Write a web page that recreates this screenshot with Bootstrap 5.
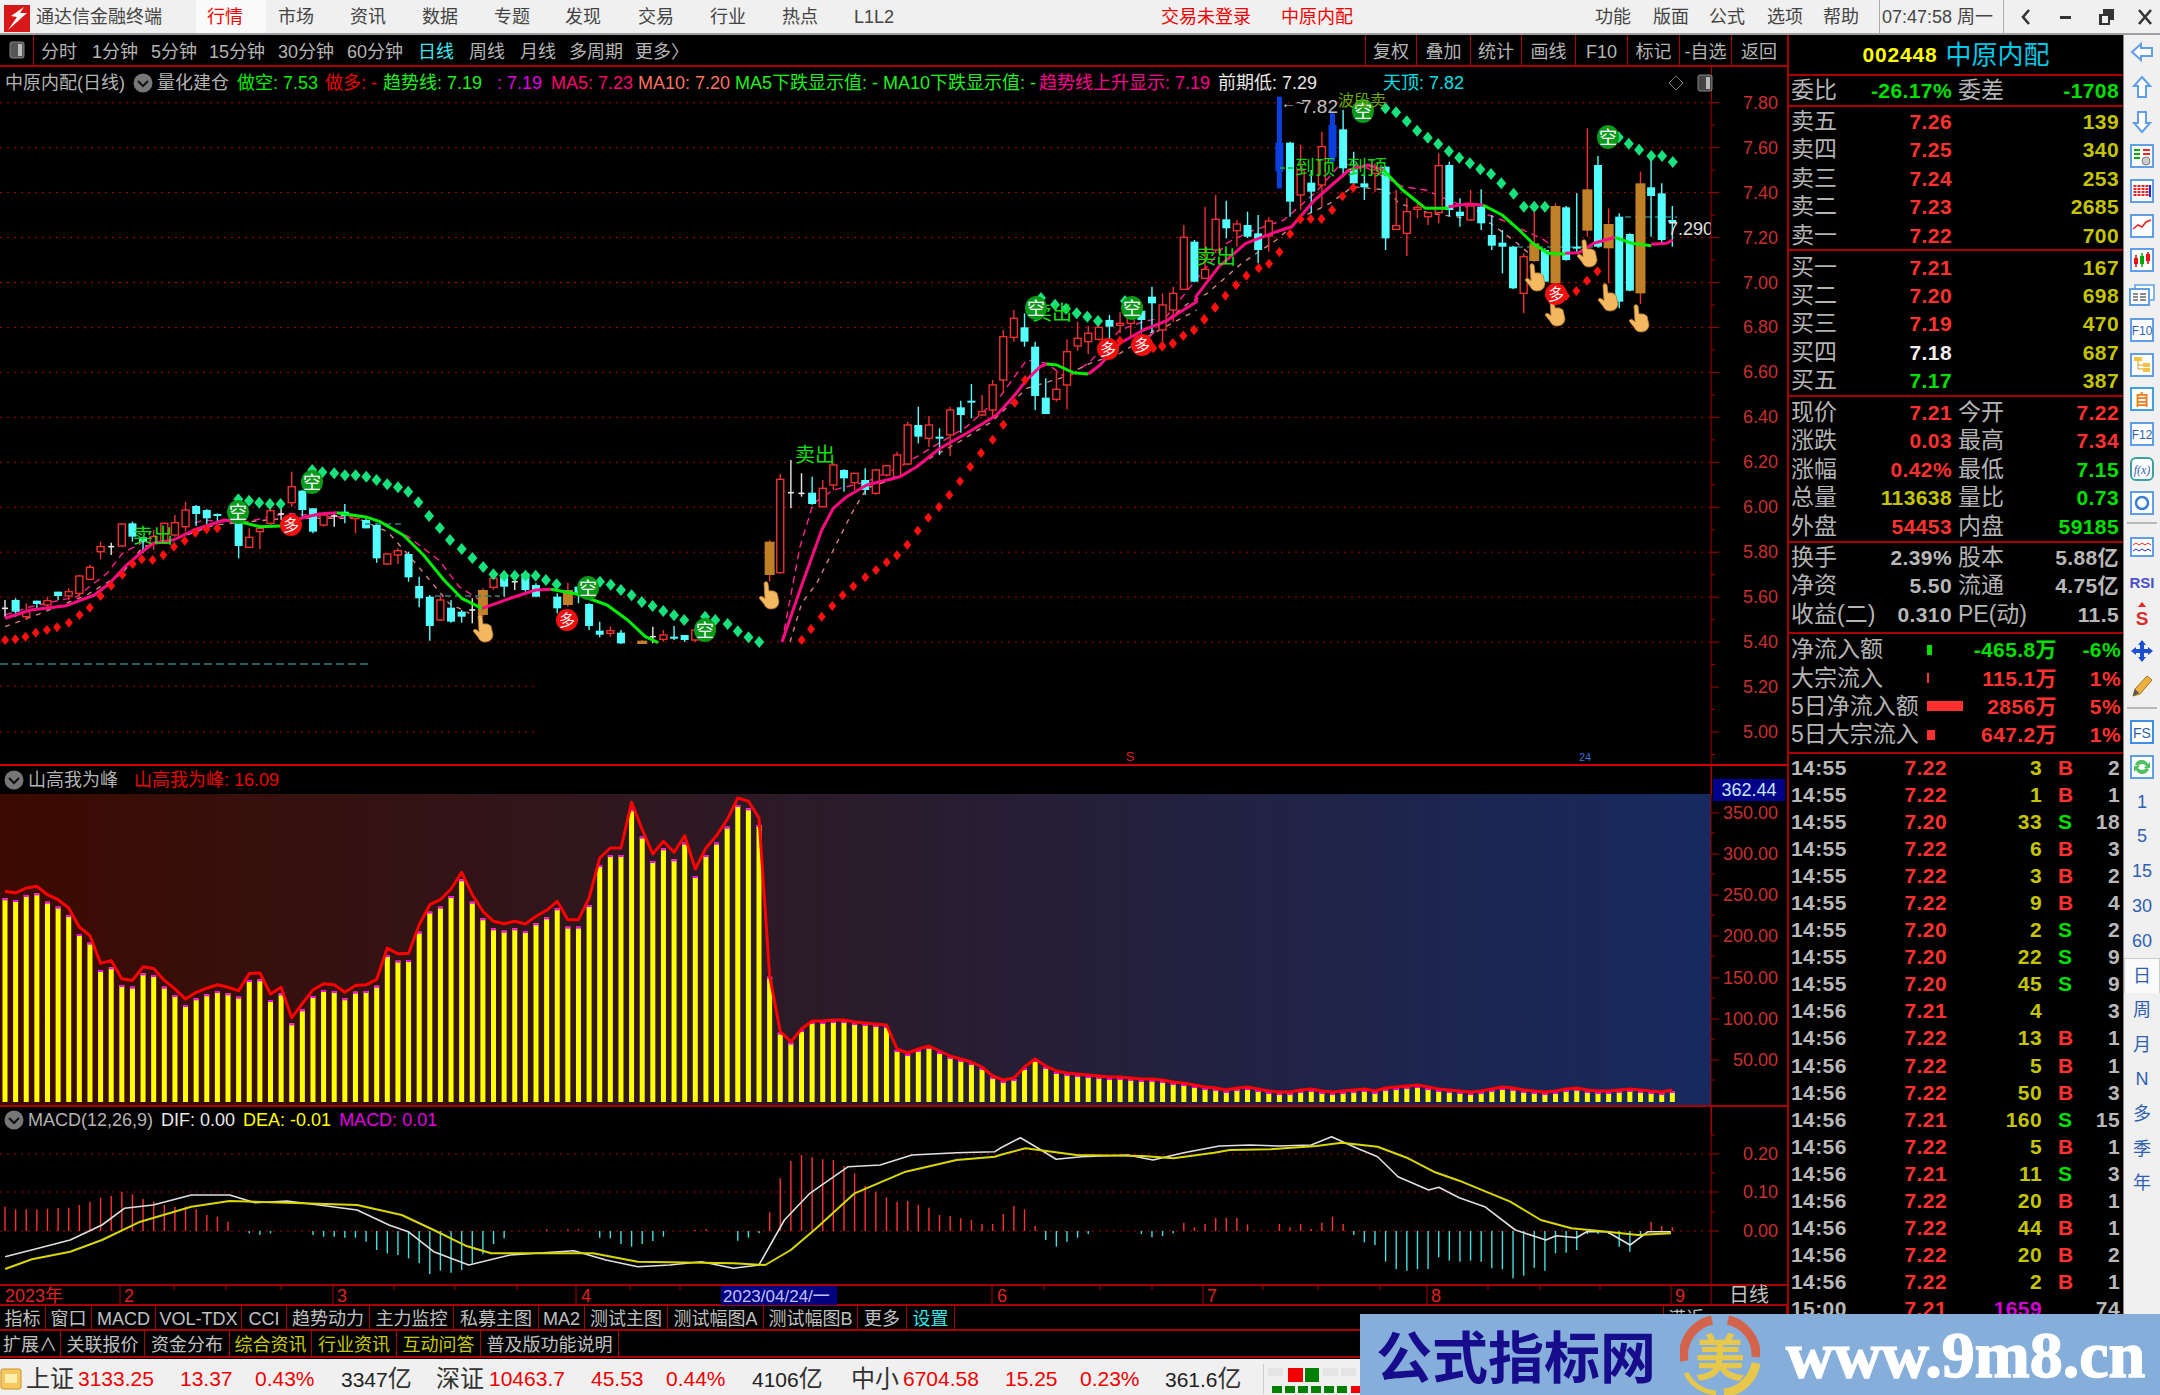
<!DOCTYPE html>
<html lang="zh-CN">
<head>
<meta charset="utf-8">
<title>通达信金融终端</title>
<link href="https://cdn.jsdelivr.net/npm/bootstrap@5.3.0/dist/css/bootstrap.min.css" rel="stylesheet">
<style>
:root{--ln:#a80000;--lab:#b4b4b4;--rd:#ff3030;--yl:#c4c400;--gn:#00e000}
html,body{margin:0;background:#000}
body{width:2160px;height:1395px;overflow:hidden;position:relative;font-family:"Liberation Sans","Noto Sans CJK SC",sans-serif;font-size:18px;line-height:1;color:var(--lab)}
.ttl{height:35px;background:#f0f0f0;color:#444;border-bottom:2px solid #a0a0a0;grid-template-columns:36px 160px 70px 72px 72px 72px 71px 73px 72px 72px 72px 319px 120px 314px 58px 56px 58px 56px 56px 124px 43px 40px 40px 37px;align-items:center;white-space:nowrap}
.ttl .act{background:#fafafa;color:#f00000;height:33px;display:flex;align-items:center;padding-left:11px}
.ttl .pl{padding-left:12px}
.ttl .redt{color:#f00000}
.ttl .sep{border-left:1px solid #aaa;height:33px;display:flex;align-items:center;padding-left:2px}
.wbody{height:1324px}
.lcol{width:1787px}
.tb1{height:32px;border-bottom:2px solid var(--ln);grid-template-columns:34px 7px 51px 59px 58px 69px 69px 71px 51px 51px 49px 66px 95px 635px 51px 54px 51px 54px 52px 52px 52px 55px;align-items:center;white-space:nowrap}
.tb1>span{padding-top:3px}
.tb1 .boxi{height:30px;border-right:1px solid var(--ln);display:flex;align-items:center;justify-content:center;padding-top:0}
.tb1 .cel{height:30px;border-left:1px solid var(--ln);display:flex;align-items:center;justify-content:center}
.tb1 .on{color:#40e8f0}
.phd{width:1712px;border-right:1px solid var(--ln);display:flex;align-items:center}
.phd1{height:33px;padding-bottom:2px}.phd2{height:28px;padding-bottom:1px}.phd3{height:26px}
.phd span{white-space:nowrap}
.hgrid1{display:grid;grid-template-columns:5px 128px 24px 80px 88px 58px 114px 54px 87px 97px 148px 156px 179px 165px 285px 29px 14px;align-items:center;width:100%}
.cgn{color:#00f000}.crd{color:#f00000}.cmg{color:#e000e0}.cpk{color:#ff0070}.csl{color:#ff7060}.clm{color:#20f020}.cfu{color:#ff0090}.cwt{color:#e8e8e8}.ccy{color:#00e0e8}
.ico{width:20px;height:20px;display:block}
.chartsvg{display:block;overflow:visible}
.brd{height:2px;background:#d00000}
.brd2{height:2px;background:var(--ln)}
.rowb{border-bottom:2px solid var(--ln);align-items:center}
.row1{height:25px;grid-template-columns:46px 46px 64px 86px 45px 83px 84px 85px 46px 83px 96px 94px 49px 48px 708px 124px}
.row2{height:27px;grid-template-columns:61px 84px 85px 82px 85px 84px 138px 1168px}
.cl{height:100%;display:flex;align-items:center;justify-content:center;border-right:1px solid var(--ln);white-space:nowrap;color:#c0c0c0;padding-top:3px}
.cl.cy{color:#c8c800}
.cl.ccy{color:#30e8e8}
.cl.lft{justify-content:flex-start;border-left:1px solid var(--ln);padding-left:4px}
.pan{width:337px;border-left:2px solid var(--ln);border-right:1px solid #888;font-size:23px}
.phead{height:41px;border-bottom:2px solid var(--ln);font-size:24px;gap:8px}
.phead b{font-weight:700;color:#ffff00;font-size:21px;letter-spacing:.8px}
.phead i{font-style:normal;color:#00c8e8;font-size:26px}
.qr{display:grid;grid-template-columns:60px 101px 6px 60px 101px;padding-left:2px;height:28.4px;align-items:center;white-space:nowrap}
.qr .n,.fr .n,.tk .n{font-size:21px;font-weight:700;letter-spacing:.4px}
.qr .n{text-align:right}
.qr>span:nth-child(3){grid-column:4}
.qr>span:nth-child(4){grid-column:5}
.blk{border-bottom:2px solid var(--ln)}
.b-wb{padding-bottom:1px}
.b-by{padding-top:1.5px}
.b-qu{padding-top:1.5px;padding-bottom:1px}
.b-fi{padding-bottom:4px}
.b-fl{padding-top:1px;padding-bottom:3px}
.r{color:var(--rd)}.y{color:var(--yl)}.g{color:var(--gn)}.w{color:#f0f0f0}.gy{color:#b8b8b8}.m{color:#d000d0}
.fr{display:grid;grid-template-columns:136px 40px 90px 64px;padding-left:2px;height:28.4px;align-items:center;white-space:nowrap}
.fr .e{text-align:right}
.brr{height:10px;display:block}
.tk{display:grid;grid-template-columns:54px 102px 95px 34px 44px;padding-left:2px;height:27.05px;align-items:center}
.tk .e{text-align:right}
.tk .bs{padding-left:16px}
.sid{width:36px;background:#f0f0f0;padding-top:0}
.sic{height:34.7px;display:flex;align-items:center;justify-content:center;color:#2f5fb0;font-size:18px}
.sic svg{display:block}
.sdiv{height:2px;background:#b8b8b8;margin:1px 3px 6px}
.sdiv2{height:2px;background:#b8b8b8;margin:4px 3px 6px}
.stab{background:#fafafa;border:1px solid #ccc;border-bottom:0}
.stat{height:36px;background:#f0f0f0;padding-top:3px;grid-template-columns:26px 52px 102px 75px 86px 95px 53px 102px 75px 86px 99px 52px 102px 75px 85px 98px 50px;align-items:center;color:#222;font-size:21px;white-space:nowrap}
.stat .cj{font-size:24px;color:#333}
.stat .rn{color:#f00000}
.wmk{position:absolute;left:1360px;top:1314px;width:800px;height:81px;background:#85aedb;overflow:hidden}
.wmt{position:absolute;left:16px;top:6px;font-size:56px;font-weight:700;color:#170d8c;line-height:68px;white-space:nowrap;font-family:"Noto Sans CJK SC",sans-serif}
.wmu{position:absolute;left:426px;top:6px;font:700 66px/70px "Liberation Serif",serif;color:#fff;white-space:nowrap;-webkit-text-stroke:1.5px #fff}
.wml{position:absolute;left:320px;top:1px}
</style>
</head>
<body>

<div class="ttl d-grid">
  <svg width="30" height="30" viewBox="0 0 30 30"><rect x="4" y="3" width="26" height="27" fill="#d81818"/><path d="M24 5 L11 14 L17 15 L8 28 L27 11 L20 11 Z" fill="#fff"/></svg>
  <span>通达信金融终端</span>
  <span class="act">行情</span><span class="pl">市场</span><span class="pl">资讯</span><span class="pl">数据</span><span class="pl">专题</span><span class="pl">发现</span><span class="pl">交易</span><span class="pl">行业</span><span class="pl">热点</span><span class="pl">L1L2</span>
  <span class="redt">交易未登录</span><span class="redt">中原内配</span>
  <span>功能</span><span>版面</span><span>公式</span><span>选项</span><span>帮助</span>
  <span class="sep">07:47:58 周一</span>
  <span class="sep d-flex justify-content-center"><svg width="14" height="20" viewBox="0 0 14 20"><path d="M10 3 L4 10 L10 17" fill="none" stroke="#333" stroke-width="2.6"/></svg></span>
  <span class="d-flex justify-content-center"><svg width="14" height="14"><rect x="1" y="6" width="11" height="3" fill="#333"/></svg></span>
  <span class="d-flex justify-content-center"><svg width="18" height="18" viewBox="0 0 18 18"><path d="M6 1h11v11h-4v5H2V6h4z M5 8v7h6V8z" fill="#333" fill-rule="evenodd"/></svg></span>
  <span class="d-flex justify-content-center"><svg width="16" height="18" viewBox="0 0 16 18"><path d="M2 2 L14 16 M14 2 L2 16" stroke="#333" stroke-width="2.6"/></svg></span>
</div>

<div class="wbody d-flex">
  <div class="lcol">
    <div class="tb1 d-grid">
      <span class="boxi"><svg width="16" height="18" viewBox="0 0 16 18"><rect x="1" y="1" width="14" height="16" rx="2" fill="#555" stroke="#888"/><rect x="9" y="3" width="4" height="12" fill="#bbb"/></svg></span><span></span>
      <span>分时</span><span>1分钟</span><span>5分钟</span><span>15分钟</span><span>30分钟</span><span>60分钟</span><span class="on">日线</span><span>周线</span><span>月线</span><span>多周期</span><span>更多〉</span><span></span>
      <span class="cel">复权</span><span class="cel">叠加</span><span class="cel">统计</span><span class="cel">画线</span><span class="cel">F10</span><span class="cel">标记</span><span class="cel">-自选</span><span class="cel">返回</span>
    </div>

    <div class="phd phd1"><div class="hgrid1">
      <span></span><span>中原内配(日线)</span>
      <svg class="ico" viewBox="0 0 20 20"><circle cx="10" cy="10" r="9.5" fill="#777"/><path d="M5 8 L10 13 L15 8" fill="none" stroke="#111" stroke-width="2"/></svg>
      <span>量化建仓</span>
      <span class="cgn">做空: 7.53</span><span class="crd">做多: -</span><span class="clm">趋势线: 7.19</span><span class="cmg">: 7.19</span>
      <span class="cpk">MA5: 7.23</span><span class="csl">MA10: 7.20</span><span class="clm">MA5下跌显示值: -</span><span class="clm">MA10下跌显示值: -</span><span class="cfu">趋势线上升显示: 7.19</span><span class="cwt">前期低: 7.29</span><span class="ccy">天顶: 7.82</span>
      <svg width="16" height="16" viewBox="0 0 16 16"><path d="M8 1 L15 8 L8 15 L1 8Z" fill="none" stroke="#777"/></svg>
      <svg width="16" height="18" viewBox="0 0 16 18"><rect x="1" y="1" width="14" height="16" rx="2" fill="#444" stroke="#888"/><rect x="9" y="3" width="4" height="12" fill="#bbb"/></svg>
    </div></div>
    <svg id="s1" class="chartsvg" width="1787" height="664" viewBox="0 100 1787 664"></svg>
    <div class="brd"></div>

    <div class="phd phd2">
      <svg class="ico ms-1" viewBox="0 0 20 20"><circle cx="10" cy="10" r="9.5" fill="#777"/><path d="M5 8 L10 13 L15 8" fill="none" stroke="#111" stroke-width="2"/></svg>
      <span class="ms-1">山高我为峰</span><span class="crd ms-3">山高我为峰: 16.09</span>
    </div>
    <svg id="s2" class="chartsvg" width="1787" height="311" viewBox="0 794 1787 311"></svg>
    <div class="brd2"></div>

    <div class="phd phd3">
      <svg class="ico ms-1" viewBox="0 0 20 20"><circle cx="10" cy="10" r="9.5" fill="#777"/><path d="M5 8 L10 13 L15 8" fill="none" stroke="#111" stroke-width="2"/></svg>
      <span class="ms-1">MACD(12,26,9)</span><span class="cwt ms-2">DIF: 0.00</span><span class="ms-2" style="color:#ffff00">DEA: -0.01</span><span class="cmg ms-2">MACD: 0.01</span>
    </div>
    <svg id="s3" class="chartsvg" width="1787" height="151" viewBox="0 1133 1787 151"></svg>
    <svg id="s4" class="chartsvg" width="1787" height="22" viewBox="0 1284 1787 22"></svg>

    <div class="row1 rowb d-grid">
      <span class="cl">指标</span><span class="cl">窗口</span><span class="cl">MACD</span><span class="cl">VOL-TDX</span><span class="cl">CCI</span><span class="cl">趋势动力</span><span class="cl">主力监控</span><span class="cl">私募主图</span><span class="cl">MA2</span><span class="cl">测试主图</span><span class="cl">测试幅图A</span><span class="cl">测试幅图B</span><span class="cl">更多</span><span class="cl ccy">设置</span><span></span><span class="cl lft">满近</span>
    </div>
    <div class="row2 rowb d-grid">
      <span class="cl">扩展∧</span><span class="cl">关联报价</span><span class="cl">资金分布</span><span class="cl cy">综合资讯</span><span class="cl cy">行业资讯</span><span class="cl cy">互动问答</span><span class="cl">普及版功能说明</span><span></span>
    </div>
  </div>

  <div class="pan">
    <div class="phead d-flex align-items-center justify-content-center"><b>002448</b><i>中原内配</i></div>
    <div class="blk b-wb"><div class="qr"><span>委比</span><span class="n g">-26.17%</span><span>委差</span><span class="n g">-1708</span></div></div>
    <div class="blk" id="sell"></div>
    <div class="blk b-by" id="buy"></div>
    <div class="blk b-qu" id="quo"></div>
    <div class="blk b-fi" id="fin"></div>
    <div class="blk b-fl" id="flow"></div>
    <div id="ticks"></div>
  </div>

  <div class="sid" id="side">
    <div class="sic"><svg width="24" height="20" viewBox="0 0 24 20"><path d="M2 10 L11 2 V6 H22 V14 H11 V18Z" fill="#fff" stroke="#5f9ee8" stroke-width="2"/></svg></div>
    <div class="sic"><svg width="20" height="24" viewBox="0 0 20 24"><path d="M10 2 L18 11 H14 V22 H6 V11 H2Z" fill="#fff" stroke="#5f9ee8" stroke-width="2"/></svg></div>
    <div class="sic"><svg width="20" height="24" viewBox="0 0 20 24"><path d="M10 22 L18 13 H14 V2 H6 V13 H2Z" fill="#fff" stroke="#5f9ee8" stroke-width="2"/></svg></div>
    <div class="sic"><svg width="24" height="24"><rect x="1" y="1" width="22" height="22" fill="#fff" stroke="#5f9ee8" stroke-width="2"/><path d="M4 6h6M4 10h6M4 14h6" stroke="#0a0" stroke-width="2"/><path d="M13 6h7M13 10h7" stroke="#e22" stroke-width="2"/><circle cx="16" cy="17" r="4" fill="#ccc" stroke="#777"/></svg></div>
    <div class="sic"><svg width="24" height="24"><rect x="1" y="1" width="22" height="22" fill="#fff" stroke="#5f9ee8" stroke-width="2"/><path d="M5 6v12M9 6v12M13 6v12M17 6v12" stroke-width="3" stroke-dasharray="2 1" fill="none" stroke="#e22"/><path d="M20 6v12" stroke="#22e" stroke-width="2"/></svg></div>
    <div class="sic"><svg width="24" height="24"><rect x="1" y="1" width="22" height="22" fill="#fff" stroke="#5f9ee8" stroke-width="2"/><path d="M3 15 L8 11 L12 13 L16 8 L21 6" fill="none" stroke="#e22" stroke-width="1.6"/></svg></div>
    <div class="sic"><svg width="24" height="24"><rect x="1" y="1" width="22" height="22" fill="#fff" stroke="#5f9ee8" stroke-width="2"/><path d="M6 7v12M18 4v12" stroke="#d00" stroke-width="1.5"/><path d="M12 5v14" stroke="#0a0" stroke-width="1.5"/><rect x="4" y="10" width="4" height="6" fill="#e11"/><rect x="10" y="8" width="4" height="8" fill="#0a0"/><rect x="16" y="6" width="4" height="7" fill="#e11"/></svg></div>
    <div class="sic"><svg width="26" height="22"><rect x="6" y="1" width="19" height="15" fill="#fff" stroke="#5f9ee8" stroke-width="1.5"/><rect x="1" y="5" width="19" height="16" fill="#fff" stroke="#5f9ee8" stroke-width="2"/><path d="M4 10h5M11 10h6M4 13h5M11 13h6M4 16h5M11 16h6" stroke="#666" stroke-width="1.5"/></svg></div>
    <div class="sic"><svg width="24" height="24"><rect x="1" y="1" width="22" height="22" fill="#fff" stroke="#5f9ee8" stroke-width="2"/><text x="12" y="17" text-anchor="middle" font-size="12" fill="#2f5fb0" font-family="Liberation Sans">F10</text></svg></div>
    <div class="sic"><svg width="24" height="24"><rect x="1" y="1" width="22" height="22" fill="#fff" stroke="#5f9ee8" stroke-width="2"/><path d="M8 8v8h5M8 12h5" stroke="#d9a020" fill="none"/><rect x="4" y="4" width="8" height="4" fill="#f5c040"/><rect x="13" y="10" width="7" height="4" fill="#f5c040"/><rect x="13" y="15" width="7" height="4" fill="#f5c040"/></svg></div>
    <div class="sic"><svg width="24" height="24"><rect x="1" y="1" width="22" height="22" fill="#fff" stroke="#3fa0e8" stroke-width="2"/><text x="12" y="18" text-anchor="middle" font-size="15" font-weight="700" fill="#f08020" font-family="Noto Sans CJK SC">自</text></svg></div>
    <div class="sic"><svg width="24" height="24"><rect x="1" y="1" width="22" height="22" fill="#fff" stroke="#5f9ee8" stroke-width="2"/><text x="12" y="17" text-anchor="middle" font-size="12" fill="#2f5fb0" font-family="Liberation Sans">F12</text></svg></div>
    <div class="sic"><svg width="24" height="24"><rect x="1" y="1" width="22" height="22" rx="5" fill="#fff" stroke="#3aa0a0" stroke-width="2"/><text x="12" y="17" text-anchor="middle" font-size="12" font-style="italic" fill="#2f5fb0" font-family="Liberation Serif">f(x)</text></svg></div>
    <div class="sic"><svg width="24" height="24"><rect x="1" y="1" width="22" height="22" fill="#fff" stroke="#5f9ee8" stroke-width="2"/><circle cx="12" cy="12" r="6" fill="none" stroke="#3a80d0" stroke-width="2.5"/></svg></div>
    <div class="sdiv"></div>
    <div class="sic"><svg width="24" height="20"><rect x="1" y="1" width="22" height="18" fill="#fff" stroke="#5f9ee8" stroke-width="2"/><path d="M3 8 l3-2 3 2 3-2 3 2 3-2 3 2" fill="none" stroke="#e22"/><path d="M3 14 l3-2 3 2 3-2 3 2 3-2 3 2" fill="none" stroke="#22c"/></svg></div>
    <div class="sic"><svg width="28" height="18"><text x="14" y="15" text-anchor="middle" font-size="15" font-weight="700" fill="#4a50c8" font-family="Liberation Sans">RSI</text></svg></div>
    <div class="sic"><svg width="24" height="28"><path d="M12 0 L16 5 H8Z" fill="#e22"/><text x="12" y="23" text-anchor="middle" font-size="19" font-weight="700" fill="#d83030" font-family="Liberation Sans">S</text></svg></div>
    <div class="sic"><svg width="24" height="24" viewBox="0 0 24 24"><path d="M12 1 L16 6 H14 V10 H18 V8 L23 12 L18 16 V14 H14 V18 H16 L12 23 L8 18 H10 V14 H6 V16 L1 12 L6 8 V10 H10 V6 H8Z" fill="#1a50d0"/></svg></div>
    <div class="sic"><svg width="22" height="24" viewBox="0 0 22 24"><path d="M2 22 L4 15 L16 2 L21 6 L9 20Z" fill="#f0b040" stroke="#a07020"/><path d="M2 22 L4 15 L8 19Z" fill="#555"/></svg></div>
    <div class="sdiv2"></div>
    <div class="sic"><svg width="24" height="24"><rect x="1" y="1" width="22" height="22" fill="#fff" stroke="#3f8ee8" stroke-width="2"/><text x="12" y="18" text-anchor="middle" font-size="14" fill="#2f5fb0" font-family="Liberation Sans">FS</text></svg></div>
    <div class="sic"><svg width="24" height="24"><rect x="1" y="1" width="22" height="22" fill="#fff" stroke="#5f9ee8" stroke-width="2"/><path d="M5 10 A7 7 0 0 1 18 9 L20 7 V13 H14 L16 11 A5 5 0 0 0 8 11Z M19 14 A7 7 0 0 1 6 15 L4 17 V11 H10 L8 13 A5 5 0 0 0 16 13Z" fill="#50c060"/></svg></div>
    <div class="sic">1</div><div class="sic">5</div><div class="sic">15</div><div class="sic">30</div><div class="sic">60</div>
    <div class="sic stab">日</div><div class="sic">周</div><div class="sic">月</div><div class="sic">N</div><div class="sic">多</div><div class="sic">季</div><div class="sic">年</div>
  </div>
</div>

<div class="stat d-grid">
  <svg width="22" height="24" class="ms-0"><rect x="1" y="2" width="20" height="20" rx="2" fill="#f5c860" stroke="#c89020"/><rect x="5" y="7" width="12" height="9" fill="#fff0b0"/></svg>
  <span class="cj">上证</span><span class="rn">3133.25</span><span class="rn">13.37</span><span class="rn">0.43%</span><span>3347<span class="cj">亿</span></span>
  <span class="cj">深证</span><span class="rn">10463.7</span><span class="rn">45.53</span><span class="rn">0.44%</span><span>4106<span class="cj">亿</span></span>
  <span class="cj">中小</span><span class="rn">6704.58</span><span class="rn">15.25</span><span class="rn">0.23%</span><span>361.6<span class="cj">亿</span></span>
  <svg width="130" height="30"><path d="M0 0v36" stroke="#aaa"/><g fill="#e4e4e4"><rect x="5" y="4" width="15" height="8"/><rect x="60" y="4" width="15" height="8"/><rect x="78" y="4" width="15" height="8"/></g><rect x="25" y="4" width="15" height="14" fill="#f00000"/><rect x="42" y="4" width="14" height="14" fill="#008000"/><g fill="#008000"><rect x="9" y="22" width="10" height="7"/><rect x="22" y="22" width="10" height="7"/><rect x="35" y="22" width="10" height="7"/><rect x="48" y="22" width="10" height="7"/><rect x="61" y="22" width="10" height="7"/><rect x="74" y="22" width="10" height="7"/></g><rect x="88" y="22" width="10" height="7" fill="#f00000"/></svg>
</div>

<div class="wmk">
  <span class="wmt">公式指标网</span>
  <svg class="wml" width="80" height="80" viewBox="0 0 80 80">
    <path d="M4 46 A36 36 0 0 1 32 5" fill="none" stroke="#d4634c" stroke-width="9"/>
    <path d="M48 5 A36 36 0 0 1 76 42" fill="none" stroke="#d4634c" stroke-width="9"/>
    <path d="M76 48 A36 36 0 0 1 44 78" fill="none" stroke="#e8c84a" stroke-width="9"/>
    <path d="M36 78 A36 36 0 0 1 6 58" fill="none" stroke="#e8c84a" stroke-width="5"/>
    <text x="40" y="61" text-anchor="middle" font-size="50" font-weight="700" fill="#e8c84a" font-family="Noto Sans CJK SC">美</text>
  </svg>
  <span class="wmu">www.9m8.cn</span>
</div>

<script>
(function(){
var X=function(i){return 5+10.62*i};
var h1='',h2='',h3='',h4='';
function txt(x,y,s,fill,size,anchor,extra){return '<text x="'+x+'" y="'+y+'" fill="'+fill+'" font-size="'+size+'" text-anchor="'+(anchor||'start')+'" font-family="Liberation Sans,Noto Sans CJK SC,sans-serif" '+(extra||'')+'>'+s+'</text>'}
function line(x1,y1,x2,y2,c,w,extra){return '<line x1="'+x1+'" y1="'+y1+'" x2="'+x2+'" y2="'+y2+'" stroke="'+c+'" stroke-width="'+(w||1)+'" '+(extra||'')+'/>'}
var z8=function(p){return [p[0]/1.96,440+p[1]/3]},z9=function(p){return [800+p[0]/3,300+p[1]/3]},z7=function(p){return [1150+p[0]/2.613,80+p[1]/3]};
function P(f,a){var o=[];for(var k=0;k<a.length;k+=2){o.push(f([a[k],a[k+1]]))}return o}
function poly(pts,c,w,extra){return '<polyline fill="none" points="'+pts.map(function(p){return p[0].toFixed(1)+','+p[1].toFixed(1)}).join(' ')+'" stroke="'+c+'" stroke-width="'+w+'" stroke-linejoin="round" '+(extra||'')+'/>'}

var yp=function(n){return 102.7+n*44.95};
for(var n=0;n<=12;n++){h1+=line(0,yp(n),1711,yp(n),'#b00000',1,'stroke-dasharray="2 5"')}
var col={r:'#f03030',c:'#54ffff',w:'#e8e8e8',o:'#c08028',b:'#0a40e0'};
function cand(i,t,a,b,c,d,conv){
  var x=X(i),ya=conv(a),yb=conv(b),yc=conv(c),yd=conv(d),k=col[t],s='';
  var wk=(t=='o')?'#f03030':k;
  s+=line(x,yc,x,yd,wk,t=='b'?5:1.4);
  if(t=='r'){s+='<rect x="'+(x-3.5)+'" y="'+ya+'" width="7" height="'+Math.max(yb-ya,2)+'" fill="#000" stroke="'+k+'" stroke-width="1.4"/>'}
  else if(t=='w'){s+=line(x-3,ya,x+3,ya,k,1.6)}
  else{s+='<rect x="'+(x-(t=='o'?5:4))+'" y="'+ya+'" width="'+(t=='o'?10:8)+'" height="'+Math.max(yb-ya,2)+'" fill="'+k+'"/>'}
  return s;
}
var ya=function(v){return 440+v/3},yb=function(v){return 300+v/3},yc=function(v){return 80+v/3};
var A=[[0,'w',505,505,480,530],[1,'c',480,515,475,530],[2,'r',515,530,490,540],[3,'c',482,492,482,510],[4,'r',482,495,470,510],[5,'c',455,468,455,480],[6,'r',455,468,445,480],[7,'r',408,460,405,470],[8,'r',382,418,375,420],[9,'r',320,335,305,358],[10,'w',320,320,308,345],[11,'r',252,318,250,322],[12,'c',250,290,245,305],[13,'c',292,306,290,340],[14,'r',290,310,270,330],[15,'r',250,310,248,312],[16,'r',248,285,225,290],[17,'r',210,260,185,275],[18,'c',198,222,195,258],[19,'c',210,235,208,260],[20,'c',222,226,220,250],[22,'c',230,318,225,355],[23,'r',292,322,265,325],[24,'r',265,275,255,328],[25,'r',212,250,205,255],[26,'w',222,222,205,240],[27,'r',140,188,95,200],[28,'c',152,210,150,230],[29,'c',205,275,205,280],[30,'r',225,255,220,260],[31,'w',228,228,220,260],[32,'c',215,228,192,250],[33,'r',230,235,225,280],[34,'c',240,265,235,265],[35,'c',255,355,250,368],[36,'r',342,372,340,374],[37,'r',332,345,325,372],[38,'c',342,412,335,425],[39,'c',438,475,410,502],[40,'c',470,558,465,602],[41,'r',480,540,470,542],[42,'c',503,545,480,548],[43,'c',515,530,510,548],[44,'w',510,510,475,550],[45,'o',450,525,445,530],[46,'r',415,442,410,450],[47,'c',405,440,400,470],[48,'w',425,425,415,450],[49,'c',400,450,398,455],[50,'c',435,470,430,472],[52,'c',470,505,460,520],[53,'o',450,495,428,500],[54,'c',440,460,435,490],[55,'c',492,558,490,570],[56,'c',572,584,545,592],[57,'r',572,580,560,590],[58,'c',578,610,570,615],[60,'o',602,612,600,615],[61,'w',590,590,560,610],[62,'r',585,598,570,605],[63,'c',590,596,558,600],[64,'c',585,600,585,606],[65,'r',570,600,565,606],[72,'o',305,405,300,425],[73,'r',118,398,102,400],[74,'w',158,158,60,205]];
var B=[[75,'w',580,580,520,590],[76,'c',578,612,530,614],[77,'r',565,620,540,622],[78,'r',495,555,490,570],[79,'c',510,535,508,575],[80,'r',520,548,518,570],[81,'c',540,570,505,585],[82,'r',510,580,508,584],[83,'r',497,525,495,530],[84,'r',465,530,455,532],[85,'r',375,492,365,495],[86,'c',375,410,320,430],[87,'r',375,415,348,440],[88,'c',410,412,385,465],[89,'r',330,405,320,468],[90,'c',322,345,302,398],[91,'c',302,305,252,355],[92,'r',335,345,285,348],[93,'r',255,330,240,350],[94,'r',110,240,90,280],[95,'r',55,112,30,125],[96,'c',82,125,40,140],[97,'c',140,288,125,330],[98,'c',293,342,235,342],[99,'r',268,298,215,305],[100,'r',155,255,118,328],[101,'r',115,138,65,152],[102,'r',100,125,78,162],[103,'r',82,118,55,122],[104,'c',60,80,45,120],[105,'r',70,74,35,100],[106,'r',40,70,30,110],[107,'c',32,60,10,100],[108,'c',-10,10,-40,100],[109,'r',15,90,-20,125],[110,'r',-20,30,-40,65]];
var C=[[111,'r',472,628,435,630],[112,'c',485,605,480,607],[113,'r',568,595,380,597],[114,'r',418,510,345,520],[115,'c',418,445,362,475],[116,'r',432,452,420,500],[117,'c',435,470,395,474],[118,'c',460,510,405,550],[119,'r',423,468,412,515],[120,'b',188,275,50,325],[121,'c',188,365,185,410],[122,'r',270,345,195,390],[123,'c',308,335,270,400],[124,'r',200,315,155,380],[125,'b',135,232,100,245],[126,'c',148,265,90,290],[127,'c',270,310,215,315],[128,'c',310,322,280,360],[129,'r',270,280,250,335],[130,'c',260,475,258,510],[131,'r',437,448,330,450],[132,'r',395,460,355,528],[133,'r',382,386,370,415],[134,'r',398,410,396,435],[135,'r',257,398,220,430],[136,'c',255,390,245,410],[137,'c',395,408,355,440],[138,'r',378,420,330,422],[139,'c',380,430,328,450],[140,'c',465,497,405,510],[141,'c',488,500,450,580],[142,'c',500,625,498,627],[143,'r',530,640,520,700],[144,'o',490,543,390,546],[145,'c',510,605,505,607],[146,'o',378,610,370,612],[147,'c',382,540,378,542],[148,'c',500,505,340,520],[149,'o',328,452,145,470],[150,'c',255,500,228,502],[151,'o',432,505,385,610],[152,'c',410,665,400,685],[153,'c',462,632,460,634],[154,'o',310,640,275,672],[155,'c',322,348,235,470],[156,'c',340,480,310,490],[157,'c',420,424,378,500]];

var dPk='stroke-dasharray="7 5"',dTn='stroke-dasharray="5 6"';
h1+=poly(P(z8,[10,525,60,500,150,470,210,400,240,340,300,290,400,240,470,250,560,220,640,230,720,230,800,290,860,360,900,440,940,480]),'#ff2090',1.4,dPk);
h1+=poly(P(z8,[10,560,80,520,170,465,240,400,280,320,340,300,420,255,560,235,700,235,760,275,820,380,880,490,920,520]),'#d88080',1.4,dTn);
A.forEach(function(a){h1+=cand(a[0],a[1],a[2],a[3],a[4],a[5],ya)});
h1+='<rect x="0" y="644" width="775" height="118" fill="#000"/>';
h1+=line(0,yp(12.98),538,yp(12.98),'#b00000',1,'stroke-dasharray="2 5"')+line(0,yp(14),538,yp(14),'#b00000',1,'stroke-dasharray="2 5"');
h1+=line(0,664,370,664,'#2f7f80',1.4,'stroke-dasharray="8 4"');
h1+=line(365,524,403,524,'#2f7f80',1.4,'stroke-dasharray="6 4"')+line(435,596,500,596,'#2f7f80',1.4,'stroke-dasharray="6 4"')+line(1517,247,1600,247,'#2f7f80',1.4,'stroke-dasharray="6 4"')+line(1625,217,1677,217,'#2f7f80',1.4,'stroke-dasharray="6 4"');
h1+=poly([[782,642]].concat(P(z9,[0,740,40,610,100,570,200,545,300,500,400,440,500,380,600,290,680,180,740,190,800,235,870,185,960,90,1030,65,1150,40])),'#ff2090',1.4,dPk);
h1+=poly([[790,642]].concat(P(z9,[5,910,50,850,100,750,155,640,200,565,300,530,380,480,470,430,575,365,680,265,780,235,870,190,960,160,1060,100,1190,30])),'#d88080',1.4,dTn);
h1+=poly(P(z7,[0,770,50,700,120,600,200,490,260,455,350,420,430,340,500,250,570,265,610,290,660,320,720,330,780,360,860,395,920,420,1030,480,1070,515]),'#ff2090',1.4,dPk);
h1+=poly(P(z7,[0,760,100,670,150,640,240,550,330,480,400,410,470,370,530,320,620,330,650,370,730,400,800,410,890,430,960,490,1030,560]),'#d88080',1.4,dTn);
B.forEach(function(a){h1+=cand(a[0],a[1],a[2],a[3],a[4],a[5],yb)});
C.forEach(function(a){h1+=cand(a[0],a[1],a[2],a[3],a[4],a[5],yc)});
var PK='#ff0a82',GR='#00f000';
[[PK,P(z8,[10,535,60,510,130,497,185,465,215,430,245,380,275,340,300,310,340,300,380,270,440,240,470,245])],
 [GR,P(z8,[470,245,510,260,550,258])],
 [PK,P(z8,[550,258,590,235,625,222,660,218])],
 [GR,P(z8,[660,218,720,232,745,245,790,285,830,345,870,420,905,475,945,505])],
 [PK,P(z8,[945,505,1000,475,1050,450,1080,448])],
 [GR,P(z8,[1080,448,1130,462,1190,495,1230,540,1265,590,1290,608])],
 [PK,[[782,642]].concat(P(z9,[0,870,40,760,65,690,100,625,140,590,200,555,300,530,350,500,420,445,500,400,590,345,640,290,680,240,720,200,740,192]))],
 [GR,P(z9,[740,192,770,195,820,218,865,222])],
 [PK,P(z9,[865,222,900,195,960,130,1030,90,1100,62,1150,30,1190,5]).concat(P(z7,[120,650,180,560,250,490,330,455,370,440,430,360,520,270,570,255,610,270]))],
 [GR,P(z7,[610,270,660,330,720,385,780,385])],
 [PK,P(z7,[780,380,830,372,870,375])],
 [GR,P(z7,[870,375,920,405,960,445,1000,490,1040,520,1085,522])],
 [PK,P(z7,[1085,520,1120,518,1160,490,1215,472])],
 [GR,P(z7,[1215,472,1260,490,1310,497])],
 [PK,P(z7,[1310,493,1350,490,1366,480])]
].forEach(function(s){h1+=poly(s[1],s[0],3)});
function dia(p,r,c){return '<path d="M'+p[0].toFixed(1)+' '+(p[1]-r-1)+'l'+r+' '+(r+1)+'l-'+r+' '+(r+1)+'l-'+r+' -'+(r+1)+'z" fill="'+c+'"/>'}
P(z8,[467,178,488,182,508,188,529,192,550,192,612,90,632,97,655,100,676,106,697,106,718,110,738,120,759,133,780,142,800,155,820,187,841,228,862,264,882,300,905,327,926,354,947,381,967,403,988,407,1009,407,1030,407,1050,407,1070,420,1091,433,1176,425,1197,434,1217,450,1238,466,1258,486,1279,498,1300,513,1321,526,1341,540,1382,530,1402,540,1426,552,1446,574,1467,592,1488,606]).concat(P(z9,[765,14,798,26,830,40,862,50,894,63])).concat(P(z7,[615,85,643,97,671,124,698,152,726,173,753,192,781,214,808,233,836,250,863,268,891,282,918,310,950,341,977,380,1004,380,1032,380,1225,172,1251,191,1278,209,1310,228,1338,228,1366,246])).concat([[1041,298],[1125,301]]).forEach(function(p){h1+=dia(p,5,'#18e27c')});
P(z8,[10,600,30,598,50,590,70,578,92,570,112,562,135,548,156,525,176,503,197,468,218,437,240,404,260,372,278,358,299,360,320,345,341,320,362,302,383,278,405,268,426,265]).concat(P(z9,[5,1020,33,987,65,950,97,918,128,886,160,859,196,832,228,810,260,787,291,766,322,734,353,692,385,653,417,621,448,585,480,544,511,500,543,459,578,419,610,374,644,308,675,240,960,122,1060,145,1087,140,1118,130,1150,107,1182,90,1213,59,1245,22])).concat(P(z7,[5,800,32,797,60,791,87,767,115,750,142,717,170,683,197,647,225,615,252,587,284,565,311,551,338,516,366,462,393,418,420,417,448,417,476,390,503,349,531,323,1087,648,1114,633,1142,602,1169,574])).forEach(function(p){h1+=dia(p,4,'#ff1010')});
function hand(x,y){return '<path transform="translate('+x+' '+y+')" d="M-6-12q2-3 4 0l1 8q5-1 8 2l2 9q-1 7-8 7q-5 0-7-5l-5-6q1-3 4-1l2 2z" fill="#f3b860" stroke="#b87830" stroke-width=".8"/>'}
[[484,628],[770,595],[1536,277],[1588,253],[1556,312],[1609,297],[1640,318]].forEach(function(p){h1+=hand(p[0],p[1])});
[[153,536],[815,455],[1216,257],[1052,313]].forEach(function(p){h1+=txt(p[0],p[1]+7,'卖出','#10e010',20,'middle')});
[[238,512],[312,482],[588,588],[705,630],[1036,308],[1132,308],[1363,111],[1608,137]].forEach(function(p){h1+='<ellipse cx="'+p[0]+'" cy="'+p[1]+'" rx="11" ry="12" fill="#0a9a1a"/>'+txt(p[0],p[1]+7,'空','#fff',18,'middle')});
[[291,525],[567,620],[1108,349],[1142,345],[1556,294]].forEach(function(p){h1+='<ellipse cx="'+p[0]+'" cy="'+p[1]+'" rx="11" ry="11" fill="#f01010"/>'+txt(p[0],p[1]+6,'多','#fff',16,'middle')});
h1+=line(1280,168,1297,168,'#10c010',1.5,'stroke-dasharray="5 3"');
h1+=txt(1315,175,'到顶','#10d010',20,'middle')+txt(1367,175,'到顶','#10d010',20,'middle');
h1+=txt(1362,106,'波段卖','#70a800',16,'middle');
h1+=txt(1281,108,'←~','#c0c0c0',15)+txt(1301,113,'7.82','#c0c0c0',19);
h1+='<clipPath id="cpv"><rect x="0" y="0" width="1711" height="800"/></clipPath>'+txt(1668,235,'7.290','#e0e0e0',18,'start','clip-path="url(#cpv)"');
h1+=txt(1130,761,'S','#e02020',13,'middle')+txt(1585,761,'24','#3a70d0',11,'middle');
h1+=line(1711,100,1711,764,'#a80000',1);
var labs=['7.80','7.60','7.40','7.20','7.00','6.80','6.60','6.40','6.20','6.00','5.80','5.60','5.40','5.20','5.00'];
labs.forEach(function(s,n){var y=yp(n);h1+=line(1711,y,1719,y,'#a80000',1)+line(1711,y+22.5,1715,y+22.5,'#a80000',1)+txt(1778,y+6,s,'#c83030',18,'end')});
document.getElementById('s1').innerHTML=h1;

h2+='<defs><linearGradient id="gbg" x1="0" x2="1" y1="0" y2="0"><stop offset="0" stop-color="#3c0a00"/><stop offset=".45" stop-color="#2c1a26"/><stop offset="1" stop-color="#172a60"/></linearGradient></defs>';
h2+='<rect x="0" y="794" width="1711" height="311" fill="url(#gbg)"/>';
var t1=[415,420,405,400,425,440,465,522,548,630,622,675,680,640,645,680,705,735,715,703,693,700,710,660,658,720,700,790,748,708,690,693,715,695,693,677,585,602,600,515,455,440,408,358,425,475,505,512,505,513,490,472,445,500,500,435,315,285,285,148,230,303,265,298,248,348,285,248,200,135,145,195,650,818,848].map(function(v){return 760+v/3});
var t2=[1030,1022,1022,1021,1021,1023,1024,1025,1026,1050,1054,1050,1047,1052,1057,1060,1063,1068,1077,1081,1079,1068,1060,1067,1072,1074,1075,1076,1077,1078,1078,1079,1080,1080,1081,1083,1084,1086,1088,1089,1091,1089,1088,1090,1092,1093,1093,1091,1090,1092,1093,1092,1091,1090,1092,1089,1088,1087,1086,1088,1090,1091,1092,1093,1092,1090,1088,1089,1091,1092,1093,1092,1090,1089,1091,1092,1092,1091,1090,1091,1092,1093,1091];
var tops=t1.concat(t2).slice(0,158);
tops.forEach(function(y,i){var x=X(i);h2+='<rect x="'+(x-2.5)+'" y="'+y+'" width="5" height="'+(1102-y)+'" fill="#ffff00"/><rect x="'+(x-2.5)+'" y="'+y+'" width="5" height="2" fill="#ff00ff"/>'});
var rl=tops.map(function(y,i){return [X(i),i<72?y-Math.min(7,(1102-y)*.02+4):y-1]});
h2+=poly(rl,'#ff0000',3);
[['350.00',813],['300.00',854],['250.00',895],['200.00',936],['150.00',978],['100.00',1019],['50.00',1060]].forEach(function(a){h2+=line(1711,a[1],1719,a[1],'#a80000',1)+line(1711,a[1]+20,1715,a[1]+20,'#a80000',1)+txt(1778,a[1]+6,a[0],'#c83030',18,'end')});
h2+=line(1711,766,1711,1105,'#a80000',1);
h2+='<rect x="1713" y="779" width="72" height="22" fill="#00008a"/>'+txt(1749,796,'362.44','#c8e8ff',18,'middle');
document.getElementById('s2').innerHTML=h2;

[1154,1192,1231].forEach(function(y){h3+=line(0,y,1711,y,'#b00000',1,'stroke-dasharray="2 5"')});
var H1=[320,328,328,328,326,324,323,315,305,293,288,275,283,297,305,315,320,320,328,345,350,365,null,400,405,400,null,null,null,405,410,410,413,413,425,450,460,465,475,490,522,512,518,510,490,462,432,415,null,null,null,388,null,388,388,null,413,415,432,440,432,423,410,null,392,390,388,null,null,422,413,400,337,235,183,165,172,178,180,198,220,258,275,292,305,303,315,323,345,348,355,360,372,372];
H1.forEach(function(v,i){if(v===null)return;var y=1100+v/3,x=X(i);h3+=line(x,1231,x,y,y<1231?'#ff3030':'#40e0e0',1.4)});
var H2={94:372,95:348,96:358,97:408,98:450,99:470,100:455,101:443,102:432,107:432,108:442,109:438,110:430,111:398,112:412,113:402,114:384,115:384,116:384,117:403,120:402,121:412,122:402,123:417,124:398,125:380,126:402,127:435,128:457,129:465,130:515,131:538,132:542,133:537,134:537,135:502,136:512,137:515,138:512,139:515,140:535,141:538,142:565,143:557,144:533,145:542,146:490,147:488,148:480,149:432,150:432,151:432,152:470,153:485,154:440,155:395,156:408,157:412};
Object.keys(H2).forEach(function(k){var i=+k,y=1090+H2[k]/3,x=X(i);h3+=line(x,1231,x,y,y<1231?'#ff3030':'#40e0e0',1.4)});
var z10=function(p){return [p[0]/1.568,1100+p[1]/3]},z11=function(p){return [1000+p[0]/1.96,1090+p[1]/3]};
h3+=poly(P(z10,[8,470,60,445,110,420,160,375,195,325,240,315,300,285,360,285,400,308,450,303,500,315,560,330,610,375,640,395,680,455,735,495,800,465,900,452,950,480,1000,500,1050,495,1100,485,1150,505,1190,495,1230,360,1270,280,1330,200,1380,195,1430,165,1500,158,1560,155]).concat(P(z11,[0,175,40,143,70,170,110,208,160,200,250,195,300,210,360,188,430,168,490,165,545,168,610,165,650,140,700,175,740,200,780,260,840,300,860,292,900,323,950,350,1010,420,1070,450,1090,437,1130,443,1150,425,1190,425,1235,465,1270,425,1315,425])),'#e0e0e0',1.6);
h3+=poly(P(z10,[8,507,50,478,110,455,160,420,220,365,300,320,360,303,450,308,560,315,630,345,680,390,730,437,770,460,930,460,1000,485,1150,490,1200,495,1240,450,1280,385,1340,280,1420,215,1500,180,1560,170]).concat(P(z11,[0,195,50,175,150,195,280,198,340,205,420,188,450,180,530,178,620,168,670,158,740,170,800,205,850,245,900,272,1000,335,1060,390,1120,415,1190,425,1250,435,1315,430])),'#d8d800',2);
[['0.20',1154],['0.10',1192],['0.00',1231]].forEach(function(a){h3+=line(1711,a[1],1719,a[1],'#a80000',1)+line(1711,a[1]-19,1715,a[1]-19,'#a80000',1)+txt(1778,a[1]+6,a[0],'#c83030',18,'end')});
h3+=line(1711,1107,1711,1284,'#a80000',1);
document.getElementById('s3').innerHTML=h3;

h4+=line(0,1285,1787,1285,'#a80000',2)+line(0,1305,1787,1305,'#a80000',2);
[120,333,576,992,1203,1427,1671].forEach(function(x){h4+=line(x,1285,x,1305,'#a80000',1)});
[174,226,281,394,455,517,630,680,1044,1100,1152,1263,1318,1380,1488,1540,1600].forEach(function(x){h4+=line(x,1285,x,1290,'#a80000',1)});
h4+=txt(5,1302,'2023年','#e02020',18)+txt(124,1302,'2','#e02020',18)+txt(337,1302,'3','#e02020',18)+txt(581,1302,'4','#e02020',18)+txt(997,1302,'6','#e02020',18)+txt(1207,1302,'7','#e02020',18)+txt(1431,1302,'8','#e02020',18)+txt(1675,1302,'9','#e02020',18);
h4+='<rect x="721" y="1286" width="116" height="19" fill="#000080"/>'+txt(723,1302,'2023/04/24/一','#c0c0ff',17);
h4+=line(1711,1285,1711,1305,'#a80000',1)+txt(1749,1302,'日线','#c0c0c0',20,'middle');
document.getElementById('s4').innerHTML=h4;

var q=function(d){return d.map(function(r){return '<div class="qr"><span>'+r[0]+'</span><span class="n '+r[1]+'">'+r[2]+'</span>'+(r[3]?'<span>'+r[3]+'</span><span class="n '+r[4]+'">'+r[5]+'</span>':'<span></span><span class="n y">'+r[4]+'</span>')+'</div>'}).join('')};
document.getElementById('sell').innerHTML=q([['卖五','r','7.26','',139],['卖四','r','7.25','',340],['卖三','r','7.24','',253],['卖二','r','7.23','',2685],['卖一','r','7.22','',700]]);
document.getElementById('buy').innerHTML=q([['买一','r','7.21','',167],['买二','r','7.20','',698],['买三','r','7.19','',470],['买四','w','7.18','',687],['买五','g','7.17','',387]]);
document.getElementById('quo').innerHTML=q([['现价','r','7.21','今开','r','7.22'],['涨跌','r','0.03','最高','r','7.34'],['涨幅','r','0.42%','最低','g','7.15'],['总量','y','113638','量比','g','0.73'],['外盘','r','54453','内盘','g','59185']]);
document.getElementById('fin').innerHTML=q([['换手','gy','2.39%','股本','gy','5.88亿'],['净资','gy','5.50','流通','gy','4.75亿'],['收益(二)','gy','0.310','PE(动)','gy','11.5']]);
var fl=[['净流入额','g',5,'#00e000','-465.8万','-6%'],['大宗流入','r',2,'#ff3030','115.1万','1%'],['5日净流入额','r',36,'#ff3030','2856万','5%'],['5日大宗流入','r',8,'#ff3030','647.2万','1%']];
document.getElementById('flow').innerHTML=fl.map(function(f){return '<div class="fr"><span>'+f[0]+'</span><span><i class="brr" style="width:'+f[2]+'px;background:'+f[3]+'"></i></span><span class="n e '+f[1]+'">'+f[4]+'</span><span class="n e '+f[1]+'">'+f[5]+'</span></div>'}).join('');
var tk=[['14:55','7.22',3,'B',2],['14:55','7.22',1,'B',1],['14:55','7.20',33,'S',18],['14:55','7.22',6,'B',3],['14:55','7.22',3,'B',2],['14:55','7.22',9,'B',4],['14:55','7.20',2,'S',2],['14:55','7.20',22,'S',9],['14:55','7.20',45,'S',9],['14:56','7.21',4,'',3],['14:56','7.22',13,'B',1],['14:56','7.22',5,'B',1],['14:56','7.22',50,'B',3],['14:56','7.21',160,'S',15],['14:56','7.22',5,'B',1],['14:56','7.21',11,'S',3],['14:56','7.22',20,'B',1],['14:56','7.22',44,'B',1],['14:56','7.22',20,'B',2],['14:56','7.22',2,'B',1],['15:00','7.21',1659,'',74]];
document.getElementById('ticks').innerHTML=tk.map(function(t){return '<div class="tk"><span class="n gy">'+t[0]+'</span><span class="n e r">'+t[1]+'</span><span class="n e '+(t[2]>999?'m':'y')+'">'+t[2]+'</span><span class="n bs '+(t[3]=='B'?'r':'g')+'">'+t[3]+'</span><span class="n e gy">'+t[4]+'</span></div>'}).join('');
})();
</script>
<script src="https://cdn.jsdelivr.net/npm/bootstrap@5.3.0/dist/js/bootstrap.bundle.min.js"></script>
</body>
</html>
